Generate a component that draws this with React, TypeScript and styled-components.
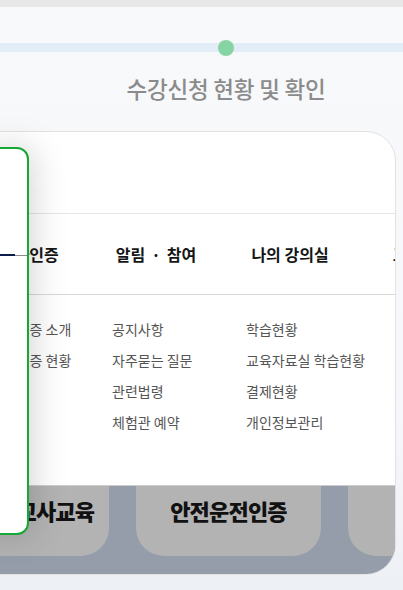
import { FunctionComponent } from "react";
import styled, { createGlobalStyle } from "styled-components";

const GlobalStyle = createGlobalStyle`
    html, body {
        margin: 0;
        padding: 0;
    }

    body {
        font-family: "Noto Sans CJK KR", "Noto Sans", sans-serif;
        background: linear-gradient(to bottom, #f8f9fb 0%, #f6f7fa 70%, #edf0f5 100%);
        overflow: hidden;
    }
`;

const Page = styled.div`
    position: relative;
    width: 403px;
    height: 590px;
    overflow: hidden;
`;

const TopBand = styled.div`
    height: 7px;
    background-color: #e8e8e8;
`;

const StepTrack = styled.div`
    display: flex;
    align-items: center;
    height: 16px;
    margin-top: 33px;
    background: linear-gradient(
        to bottom,
        transparent 3px,
        #e3edf7 3px,
        #e3edf7 12px,
        transparent 12px
    );
`;

const StepDot = styled.div`
    width: 16px;
    height: 16px;
    margin-left: 218px;
    border-radius: 50%;
    background-color: #86d3a3;
`;

const StepLabel = styled.div`
    width: 452px;
    margin-top: 19px;
    text-align: center;
    font-size: 22.5px;
    line-height: 26px;
    font-weight: 500;
    color: #8b8b8b;
    letter-spacing: -0.2px;
`;

const Card = styled.div`
    display: flex;
    flex-direction: column;
    width: 442px;
    height: 444px;
    margin-top: 30px;
    margin-left: -46px;
    border: 1px solid #e2e2e2;
    border-radius: 30px;
    background-color: #ffffff;
    overflow: hidden;
    box-sizing: border-box;
`;

const CardHeader = styled.div`
    height: 81px;
    border-bottom: 1px solid #e6e6e6;
`;

const Columns = styled.div`
    display: grid;
    grid-template-columns: repeat(4, 134px);
`;

const NavRow = styled(Columns)`
    height: 80px;
    align-items: center;
    border-bottom: 1px solid #d8d8d8;
`;

const NavItem = styled.div`
    text-align: center;
    white-space: nowrap;
    font-size: 16px;
    font-weight: 700;
    color: #151515;
`;

const NavDot = styled.span`
    padding: 0 6px;
`;

const LinkArea = styled(Columns)`
    flex: 1;
    padding-top: 19px;
    align-items: start;
`;

const LinkList = styled.ul`
    margin: 0;
    padding: 0 0 0 23px;
    list-style: none;
`;

const LinkItem = styled.li`
    font-size: 14px;
    line-height: 31px;
    color: #555555;
    white-space: nowrap;
`;

const TileStrip = styled.div`
    display: flex;
    gap: 27px;
    height: 88px;
    margin-left: -31px;
    border-top: 1px solid #cdcdcd;
    background-color: #959dab;
`;

const Tile = styled.div`
    flex: 0 0 185px;
    height: 70px;
    padding-top: 7px;
    box-sizing: border-box;
    border-radius: 0 0 28px 28px;
    background-color: #b3b3b3;
    text-align: center;
    font-size: 22px;
    line-height: 34px;
    font-weight: 900;
    color: #111111;
    white-space: nowrap;
    letter-spacing: -0.8px;
`;

const SidePanel = styled.div`
    position: absolute;
    left: -20px;
    top: 147px;
    width: 49px;
    height: 388px;
    box-sizing: border-box;
    border: 2px solid #17a733;
    border-radius: 12px;
    background-color: #ffffff;
    box-shadow: 4px 0 34px rgba(0, 0, 0, 0.17);
`;

const PanelIndicator = styled.div`
    display: flex;
    align-items: center;
    margin-top: 105px;
`;

const IndicatorBar = styled.div`
    width: 33px;
    height: 2px;
    background-color: #0d1b4d;
`;

const IndicatorLine = styled.div`
    flex: 1;
    height: 1px;
    background-color: #8c8c8c;
`;

const menus = [
    {
        title: "운전자인증",
        links: ["운전자인증 소개", "운전자인증 현황"],
    },
    {
        title: "알림 · 참여",
        links: ["공지사항", "자주묻는 질문", "관련법령", "체험관 예약"],
    },
    {
        title: "나의 강의실",
        links: ["학습현황", "교육자료실 학습현황", "결제현황", "개인정보관리"],
    },
    {
        title: "고객 센터",
        links: [],
    },
];

const tiles = ["어린이집교사교육", "안전운전인증", "고객센터"];

const App: FunctionComponent = () => {
    return (
        <>
            <GlobalStyle />
            <Page>
                <TopBand />
                <StepTrack>
                    <StepDot />
                </StepTrack>
                <StepLabel>수강신청 현황 및 확인</StepLabel>
                <Card>
                    <CardHeader />
                    <NavRow>
                        {menus.map(menu => (
                            <NavItem key={menu.title}>
                                {menu.title.includes("·") ? (
                                    <>
                                        알림<NavDot>·</NavDot>참여
                                    </>
                                ) : (
                                    menu.title
                                )}
                            </NavItem>
                        ))}
                    </NavRow>
                    <LinkArea>
                        {menus.map(menu => (
                            <LinkList key={menu.title}>
                                {menu.links.map(link => (
                                    <LinkItem key={link}>{link}</LinkItem>
                                ))}
                            </LinkList>
                        ))}
                    </LinkArea>
                    <TileStrip>
                        {tiles.map(tile => (
                            <Tile key={tile}>{tile}</Tile>
                        ))}
                    </TileStrip>
                </Card>
                <SidePanel>
                    <PanelIndicator>
                        <IndicatorBar />
                        <IndicatorLine />
                    </PanelIndicator>
                </SidePanel>
            </Page>
        </>
    );
};

export default App;
